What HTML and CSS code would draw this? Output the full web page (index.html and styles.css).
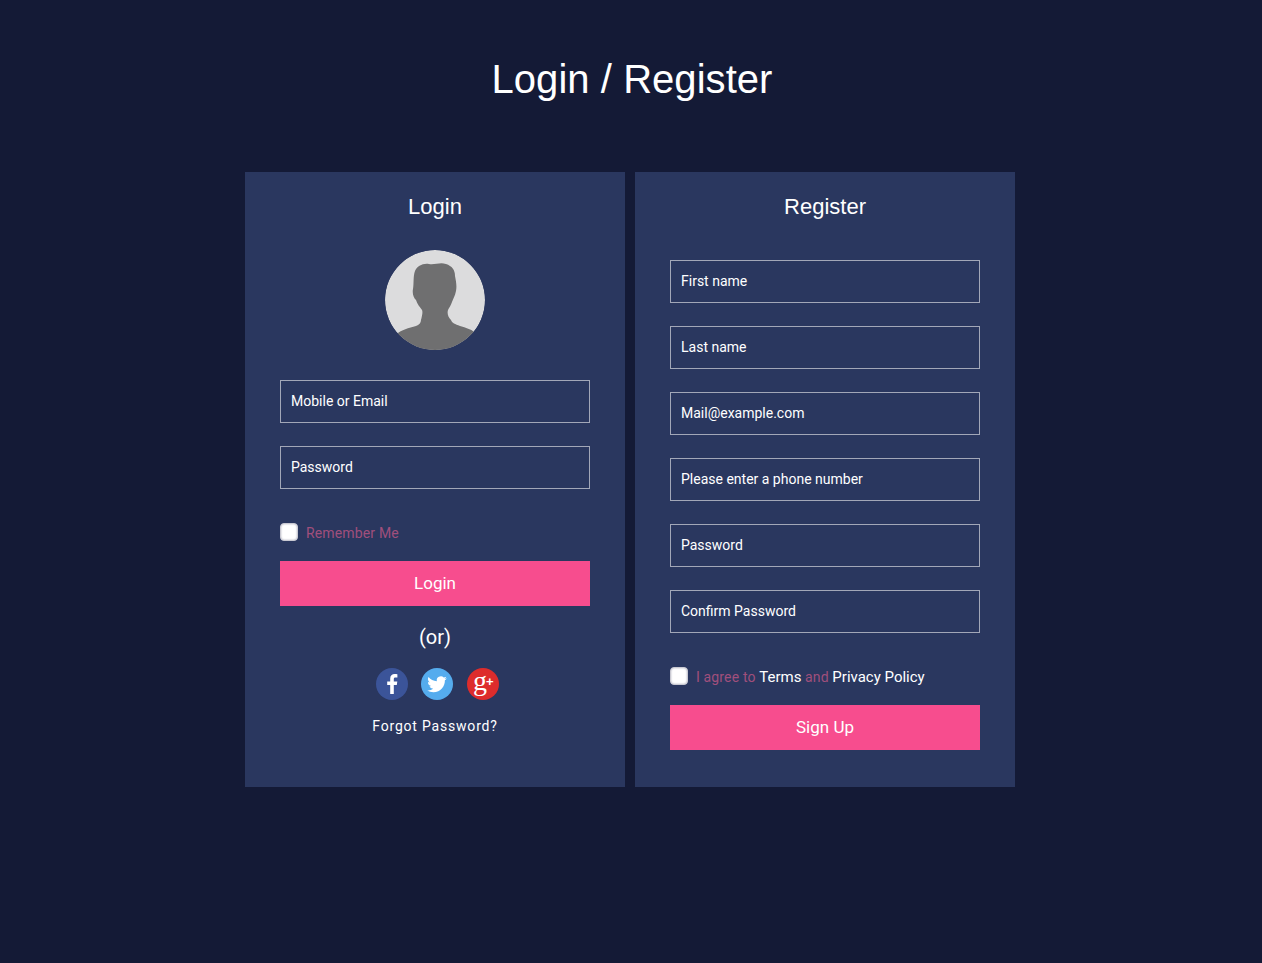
FILE: index.html
```html
<!DOCTYPE html>
<html lang="en">
<head>
<meta charset="utf-8">
<title>Login / Register</title>
<link rel="stylesheet" href="styles.css">
</head>
<body>
<h1 class="page-title">Login / Register</h1>
<main class="panels">
  <section class="panel">
    <h2 class="panel-title">Login</h2>
    <div class="avatar">
      <svg viewBox="0 0 100 100" width="100" height="100" aria-hidden="true">
        <circle cx="50" cy="50" r="50" fill="#dcdcdd"/>
        <path class="silhouette" d="M12 84 C16 80 24 78 31 76 C34 75 36 73 36 70 C37 66 38 62 37 60 C35 57 32 54 31 50 C29 48 27 44 28 39 C29 34 28 26 30 21 C32 16 38 13 44 14 C50 15 55 12 61 14 C67 16 70 20 70 26 C71 31 72 36 71 41 C70 46 68 49 67 52 C66 55 64 58 63 60 C62 63 63 67 66 70 C67 73 70 74 75 76 C81 78 86 79 89 82 A50 50 0 0 1 12 84 Z"/>
      </svg>
    </div>
    <form class="fields">
      <input class="field" type="text" placeholder="Mobile or Email">
      <input class="field" type="password" placeholder="Password">
    </form>
    <label class="check-row">
      <span class="check"></span>
      <span class="muted">Remember Me</span>
    </label>
    <button class="submit" type="button">Login</button>
    <p class="or">(or)</p>
    <div class="socials">
      <a class="social fb" href="#" aria-label="Facebook">
        <svg viewBox="0 0 32 32" width="32" height="32"><path fill="#fff" d="M17.800 26V17h3l.5-3.600h-3.500v-2.200c0-1 .3-1.700 1.800-1.700h1.800V6.300c-.4 0-1.500-.2-2.700-.2-2.700 0-4.500 1.600-4.500 4.600v2.700h-3V17h3v9z"/></svg>
      </a>
      <a class="social tw" href="#" aria-label="Twitter">
        <svg viewBox="0 0 32 32" width="32" height="32"><path fill="#fff" transform="translate(6.200 6.500) scale(.82)" d="M23.950 4.570a10 10 0 0 1-2.820.77 4.960 4.960 0 0 0 2.160-2.720c-.95.550-2 .96-3.130 1.190a4.920 4.920 0 0 0-8.380 4.480C7.690 8.090 4.070 6.130 1.640 3.160a4.820 4.820 0 0 0-.67 2.480c0 1.710.87 3.210 2.190 4.100a4.900 4.900 0 0 1-2.230-.62v.06a4.920 4.920 0 0 0 3.950 4.830 5 5 0 0 1-2.210.08 4.940 4.940 0 0 0 4.600 3.420A9.870 9.870 0 0 1 0 19.540a14 14 0 0 0 7.560 2.210c9.050 0 14-7.500 14-13.980 0-.21 0-.42-.02-.63a9.940 9.940 0 0 0 2.410-2.550z"/></svg>
      </a>
      <a class="social gp" href="#" aria-label="Google Plus">
        <span class="gp-g">g</span><span class="gp-plus">+</span>
      </a>
    </div>
    <a class="forgot" href="#">Forgot Password?</a>
  </section>
  <section class="panel">
    <h2 class="panel-title">Register</h2>
    <form class="fields fields-register">
      <input class="field" type="text" placeholder="First name">
      <input class="field" type="text" placeholder="Last name">
      <input class="field" type="text" placeholder="Mail@example.com">
      <input class="field" type="text" placeholder="Please enter a phone number">
      <input class="field" type="password" placeholder="Password">
      <input class="field" type="password" placeholder="Confirm Password">
    </form>
    <label class="check-row">
      <span class="check"></span>
      <span class="muted">I agree to <a class="link" href="#">Terms</a> and <a class="link" href="#">Privacy Policy</a></span>
    </label>
    <button class="submit" type="button">Sign Up</button>
  </section>
</main>
</body>
</html>
```
FILE: styles.css
```css
* { box-sizing: border-box; }
html, body { margin: 0; padding: 0; }
body {
  background: #141a36;
  min-height: 963px;
  font-family: Roboto, "Liberation Sans", sans-serif;
  color: #fff;
  padding-top: 56px;
}
.page-title {
  margin: 0 0 69px;
  font: 400 40px/47px "Liberation Sans", Arial, sans-serif;
  letter-spacing: .05px;
  text-align: center;
  padding-left: 2px;
}
.panels {
  display: flex;
  gap: 10px;
  width: 770px;
  margin-left: 245px;
}
.panel {
  width: 380px;
  height: 615px;
  background: #2a375f;
  padding: 22px 35px 0;
  display: flex;
  flex-direction: column;
  align-items: stretch;
}
.panel-title {
  margin: 0;
  font: 400 22px/25px "Liberation Sans", Arial, sans-serif;
  text-align: center;
}
.avatar {
  width: 100px;
  height: 100px;
  margin: 31px auto 30px;
  border-radius: 50%;
  overflow: hidden;
}
.avatar svg { display: block; }
.silhouette { fill: #6f6f70; }
.fields {
  display: flex;
  flex-direction: column;
  gap: 23px;
}
.fields-register { margin-top: 41px; }
.field {
  display: block;
  width: 310px;
  height: 43px;
  padding: 0 10px 2px;
  background: transparent;
  border: 1px solid #a2a7b8;
  border-radius: 0;
  outline: none;
  color: #fff;
  font: 400 14px Roboto, sans-serif;
}
.field::placeholder { color: #fff; opacity: 1; }
.check-row {
  display: flex;
  align-items: center;
  gap: 8px;
  margin-top: 34px;
  height: 18px;
  font-size: 14px;
}
.check {
  flex: none;
  width: 18px;
  height: 18px;
  background: #fff;
  border: 1px solid #c9c9d2;
  border-radius: 4px;
  box-shadow: inset 0 0 2px #a9a9b8;
}
.muted {
  padding-top: 2px;
  color: #a04f7c;
  letter-spacing: .15px;
}
.link {
  color: #fff;
  text-decoration: none;
  font-size: 15px;
  letter-spacing: 0;
}
.submit {
  display: block;
  width: 310px;
  height: 45px;
  margin-top: 20px;
  padding: 0 0 2px;
  background: #f74d8e;
  border: 0;
  color: #fff;
  font: 400 17px Roboto, sans-serif;
}
.or {
  margin: 20px 0 0;
  font-size: 20px;
  line-height: 23px;
  text-align: center;
}
.socials {
  display: flex;
  justify-content: center;
  gap: 13px;
  margin-top: 19px;
  padding-left: 5px;
}
.social {
  position: relative;
  display: block;
  width: 32px;
  height: 32px;
  border-radius: 50%;
  color: #fff;
  text-decoration: none;
}
.social svg { display: block; }
.fb { background: #3b5499; }
.tw { background: #55acee; }
.gp { background: #dd2c2c; margin-left: 1px; }
.gp-g {
  position: absolute;
  left: 6px;
  top: 0;
  font: 400 28px/26px "Liberation Serif", serif;
}
.gp-plus {
  position: absolute;
  left: 19px;
  top: 7px;
  font: 700 13px/14px "Liberation Sans", sans-serif;
}
.forgot {
  margin-top: 18px;
  text-align: center;
  color: #fff;
  text-decoration: none;
  font-size: 14px;
  line-height: 16px;
  letter-spacing: .8px;
}
```
